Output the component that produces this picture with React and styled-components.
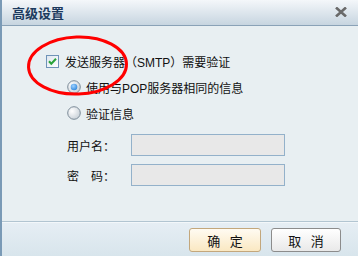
import React from 'react';
import styled, { createGlobalStyle } from 'styled-components';

const GlobalStyle = createGlobalStyle`
  html, body {
    margin: 0;
    padding: 0;
    background: #e8eff2;
  }
  body {
    font-family: "Liberation Sans", "Noto Sans CJK SC", sans-serif;
    font-size: 12px;
    color: #111;
  }
`;

const CheckIcon = () => (
  <svg width="13" height="13" viewBox="0 0 13 13">
    <defs>
      <linearGradient id="cbg" x1="0" y1="0" x2="1" y2="1">
        <stop offset="0" stopColor="#dde6ee" />
        <stop offset="1" stopColor="#ffffff" />
      </linearGradient>
    </defs>
    <rect x="0.5" y="0.5" width="12" height="12" fill="url(#cbg)" stroke="#6f93b8" />
    <path d="M3 6.3 L5.3 8.8 L10 3.8" fill="none" stroke="#29a33a" strokeWidth="2" />
  </svg>
);

const RadioIcon = ({ checked }) => (
  <svg width="14" height="14" viewBox="0 0 14 14">
    <defs>
      <radialGradient id="rbg" cx="0.35" cy="0.35" r="0.7">
        <stop offset="0" stopColor="#ffffff" />
        <stop offset="1" stopColor="#c9d1d8" />
      </radialGradient>
      <radialGradient id="rdot" cx="0.4" cy="0.35" r="0.7">
        <stop offset="0" stopColor="#9fd2ff" />
        <stop offset="1" stopColor="#2f86dc" />
      </radialGradient>
    </defs>
    <circle cx="7" cy="7" r="6.3" fill="url(#rbg)" stroke="#7d8c99" />
    {checked && <circle cx="7" cy="7" r="3.3" fill="url(#rdot)" />}
  </svg>
);

const App = () => {
  return (
    <>
      <GlobalStyle />
      <Dialog>
        <TitleBar>
          <Title>高级设置</Title>
          <CloseButton aria-label="关闭">
            <svg width="12" height="10" viewBox="0 0 12 10">
              <path d="M1 0.5 L11 9.5 M11 0.5 L1 9.5" stroke="#6a6a6a" strokeWidth="2.6" />
            </svg>
          </CloseButton>
        </TitleBar>
        <Body>
          <OptionRow>
            <CheckIcon />
            <span>发送服务器（SMTP）需要验证</span>
          </OptionRow>
          <OptionRow $indent>
            <RadioIcon checked />
            <span>使用与POP服务器相同的信息</span>
          </OptionRow>
          <OptionRow $indent>
            <RadioIcon />
            <span>验证信息</span>
          </OptionRow>
          <Fields>
            <FieldRow>
              <FieldLabel>用户名：</FieldLabel>
              <TextInput disabled />
            </FieldRow>
            <FieldRow>
              <FieldLabel>密　码：</FieldLabel>
              <TextInput type="password" disabled />
            </FieldRow>
          </Fields>
        </Body>
        <Footer>
          <Button $primary>确 定</Button>
          <Button>取 消</Button>
        </Footer>
        <Annotation width="358" height="256" viewBox="0 0 358 256">
          <ellipse cx="77.5" cy="65.5" rx="49" ry="28.5" fill="none" stroke="#ff0000" strokeWidth="3" transform="rotate(-2 77.5 65.5)" />
        </Annotation>
      </Dialog>
    </>
  );
};

const Dialog = styled.div`
  position: relative;
  width: 358px;
  height: 256px;
  box-sizing: border-box;
  border-left: 2px solid #7a9ab6;
  background: #e8eff2;
  display: flex;
  flex-direction: column;
  overflow: hidden;
`;

const TitleBar = styled.div`
  height: 25px;
  flex-shrink: 0;
  display: flex;
  align-items: center;
  justify-content: space-between;
  padding: 0 11px 0 10px;
  background: linear-gradient(#f4f7fa, #c7d5e0);
  border-bottom: 1px solid #8aa2b7;
`;

const Title = styled.span`
  font-family: "Noto Sans CJK SC", sans-serif;
  font-size: 13px;
  font-weight: bold;
  color: #1c3a5e;
  line-height: 25px;
`;

const CloseButton = styled.span`
  display: flex;
  align-items: center;
  margin-top: -2px;
`;

const Body = styled.div`
  height: 195px;
  flex-shrink: 0;
  box-sizing: border-box;
  padding: 22px 0 0 44px;
`;

const OptionRow = styled.div`
  height: 26px;
  display: flex;
  align-items: center;
  gap: ${(p) => (p.$indent ? '5px' : '6px')};
  padding-left: ${(p) => (p.$indent ? '21px' : '0')};
  white-space: nowrap;
`;

const Fields = styled.div`
  display: flex;
  flex-direction: column;
  gap: 8px;
  margin-top: 8px;
  padding-left: 21px;
`;

const FieldRow = styled.div`
  display: flex;
  align-items: center;
  height: 22px;
`;

const FieldLabel = styled.span`
  width: 64px;
  white-space: nowrap;
`;

const TextInput = styled.input`
  width: 154px;
  height: 22px;
  box-sizing: border-box;
  border: 1px solid #93b1ca;
  background: #e8e8e8;
  margin: 0;
  padding: 0 4px;
`;

const Footer = styled.div`
  flex: 1;
  display: flex;
  justify-content: flex-end;
  align-items: flex-start;
  gap: 10px;
  padding: 6px 17px 0 0;
  border-top: 1px solid #b2c5d1;
  box-shadow: inset 0 1px 0 #f3f7fa;
  background: linear-gradient(#e6eef4, #d8e5ec);
`;

const Button = styled.button`
  width: ${(p) => (p.$primary ? '72px' : '70px')};
  height: 24px;
  box-sizing: border-box;
  border-radius: 3px;
  border: 1px solid ${(p) => (p.$primary ? '#c3a77c' : '#8c8c8c')};
  background: ${(p) =>
    p.$primary ? 'linear-gradient(#fffbf2, #fae8c2)' : 'linear-gradient(#ffffff, #e9e9e9)'};
  font-family: "Liberation Sans", "Noto Sans CJK SC", sans-serif;
  font-size: 13px;
  color: #111;
  padding: 0 0 0 3px;
  white-space: pre;
  letter-spacing: 3px;
`;

const Annotation = styled.svg`
  position: absolute;
  left: -2px;
  top: 0;
  pointer-events: none;
`;

export default App;
